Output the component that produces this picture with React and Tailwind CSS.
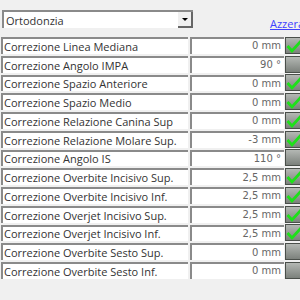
import React from "react";

const rows = [
  ["Correzione Linea Mediana", "0 mm", true],
  ["Correzione Angolo IMPA", "90 °", false],
  ["Correzione Spazio Anteriore", "0 mm", true],
  ["Correzione Spazio Medio", "0 mm", true],
  ["Correzione Relazione Canina Sup", "0 mm", true],
  ["Correzione Relazione Molare Sup.", "-3 mm", true],
  ["Correzione Angolo IS", "110 °", false],
  ["Correzione Overbite Incisivo Sup.", "2,5 mm", true],
  ["Correzione Overbite Incisivo Inf.", "2,5 mm", true],
  ["Correzione Overjet Incisivo Sup.", "2,5 mm", true],
  ["Correzione Overjet Incisivo Inf.", "2,5 mm", true],
  ["Correzione Overbite Sesto Sup.", "0 mm", false],
  ["Correzione Overbite Sesto Inf.", "0 mm", false],
];

function Check({ on }) {
  return (
    <div className="relative w-[16px] h-[17px] shrink-0 border border-[#4a4f4a] bg-gradient-to-b from-[#b4b8b4] to-[#7c817c]">
      {on && (
        <svg className="absolute left-[0px] top-[0px]" width="16" height="16" viewBox="0 0 16 16">
          <path d="M1.5 8 L6 13 L15.5 2.5" fill="none" stroke="#1ee01a" strokeWidth="2.8" />
        </svg>
      )}
    </div>
  );
}

export default function App() {
  return (
    <div className="w-[300px] h-[300px] overflow-hidden bg-[#f0f0f0] relative">
      <div className="flex items-end pt-[10px] pl-[2px]">
        <div className="shrink-0 w-[191px] h-[18px] bg-white border-t-2 border-l-2 border-[#8a8a8a] flex items-center relative">
          <span className="pl-[2px] text-[11px] text-[#333] font-['Open_Sans',sans-serif] leading-none">Ortodonzia</span>
          <div className="absolute right-[0px] top-[0px] w-[15px] h-[16px] bg-[#f0f0f0] border-r-2 border-b-2 border-[#666] flex items-center justify-center">
            <div className="w-0 h-0 border-l-[3px] border-r-[3px] border-t-[3px] border-l-transparent border-r-transparent border-t-black" />
          </div>
        </div>
        <span className="shrink-0 ml-[77px] -mb-[4px] text-[11px] text-[#4040ff] underline font-['Open_Sans',sans-serif] whitespace-nowrap">Azzera tutto</span>
      </div>
      <div className="flex flex-col gap-[2px] mt-[9px] pl-[1px]">
        {rows.map(([l, v, c], i) => (
          <div key={i} className="flex items-center h-[16.75px]">
            <div className="shrink-0 w-[187px] h-full bg-white border-t-2 border-l-2 border-[#8a8a8a] flex items-center pl-[1px] text-[11px] text-[#333] font-['Open_Sans',sans-serif] whitespace-nowrap overflow-hidden leading-none">
              {l}
            </div>
            <div className="shrink-0 ml-[2px] w-[94px] h-full bg-white border-t-2 border-l-2 border-[#8a8a8a] flex items-center justify-end pr-[3px] text-[10px] text-[#666] font-['DejaVu_Sans',sans-serif] whitespace-nowrap leading-none">
              {v}
            </div>
            <div className="shrink-0 ml-[1px]">
              <Check on={c} />
            </div>
          </div>
        ))}
      </div>
    </div>
  );
}
